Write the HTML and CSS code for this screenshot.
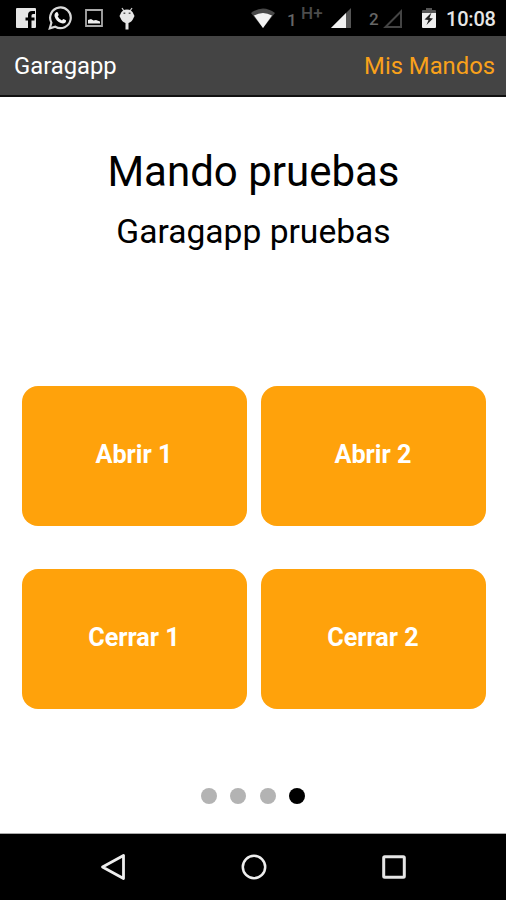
FILE: index.html
```html
<!DOCTYPE html>
<html lang="es">
<head>
<meta charset="utf-8">
<title>Garagapp</title>
<link rel="stylesheet" href="styles.css">
</head>
<body>
<div class="statusbar">
  <svg class="facebook" width="20" height="20" viewBox="0 0 20 20"><path fill="#e6e6e6" d="M1 0h18q1 0 1 1v18q0 1-1 1h-3.500v-7.500h3V9.500h-3V7.500q0-1.500 1.500-1.500h2V3h-3q-4 0-4 4v2.500H9.500v3H12V20H1q-1 0-1-1V1q0-1 1-1z"/></svg>
  <svg class="whatsapp" width="24" height="24" viewBox="0 0 24 24"><path fill="none" stroke="#d9d9d9" stroke-width="2.200" d="M1.800 22.300l1.600-5.600A10.300 10.300 0 1 1 7.300 20.700z"/><path fill="#f2f2f2" d="M8.200 6.200c.7-.5 1.400-.2 1.600.3l.9 2.200c.1.500-.8 1.300-1 1.600.9 2 2.200 3.200 4.300 4.100.5-.4 1.100-1.500 1.600-1.300l2.300 1.200c.4.300.1 1.500-.4 2.100-1.200 1.200-3 1.200-4.600.6-3.100-1.200-5.500-3.700-6.300-6.600-.4-1.500.2-3.300 1.600-4.200z"/></svg>
  <svg class="picture" width="18" height="18" viewBox="0 0 18 18"><path fill="none" stroke="#aaa" stroke-width="1.800" d="M1 1h16v16H1z"/><path fill="#eee" d="M3 14.500V11l3-1 2.500 1.500L11 11l4 1.500v2z"/></svg>
  <svg class="debug" width="16" height="24" viewBox="0 0 16 24"><path stroke="#ccc" stroke-width="1.300" d="M3 1l2 3M13 1l-2 3"/><path fill="#e6e6e6" d="M1.500 7Q3 2.500 8 2.500T14.500 7l1 2-1 2Q13 15 9.500 16v6.500h-3V16Q3 15 1.500 11l-1-2z"/><path fill="#555" d="M4.500 5.500h1.800v1.600H4.500zM9.700 5.500h1.800v1.600H9.700z"/></svg>
  <span class="grow"></span>
  <svg class="wifi" width="24" height="21" viewBox="0 0 24 21"><path fill="#484848" d="M0 5Q12-4 24 5L12 20z"/><path fill="#f2f2f2" d="M3 7.500q9-5 18 0L12 20z"/></svg>
  <span class="sim sim-one">1</span>
  <span class="network">H+</span>
  <svg class="signal" width="22" height="21" viewBox="0 0 22 21"><path fill="#555" d="M21 0v20H1z"/><path fill="#f2f2f2" d="M16 5v15H1z"/></svg>
  <span class="sim sim-two">2</span>
  <svg class="nosignal" width="20" height="20" viewBox="0 0 20 20"><path fill="none" stroke="#444" stroke-width="2" d="M18 2.500V18H2.500z"/></svg>
  <svg class="battery" width="14" height="20" viewBox="0 0 14 20"><path fill="#555" d="M4 0h6v2h3q1 0 1 1v3H0V3q0-1 1-1h3z"/><path fill="#eee" d="M0 5h14v14q0 1-1 1H1q-1 0-1-1z"/><path fill="#222" d="M9.500 4.500L2.500 11.500l4 .5-2 5L11 10.500 7.500 10z"/></svg>
  <span class="clock">10:08</span>
</div>
<header class="appbar"><span class="brand">Garagapp</span><a class="link">Mis Mandos</a></header>
<main>
  <h1>Mando pruebas</h1>
  <h2>Garagapp pruebas</h2>
  <div class="buttons">
    <button>Abrir 1</button><button>Abrir 2</button>
    <button>Cerrar 1</button><button>Cerrar 2</button>
  </div>
  <div class="dots"><i></i><i></i><i></i><i class="on"></i></div>
</main>
<nav>
  <svg width="26" height="28" viewBox="0 0 26 28"><path fill="none" stroke="#eee" stroke-width="2.800" stroke-linejoin="round" d="M23.500 2.500v23L2.500 14z"/></svg>
  <svg width="26" height="26" viewBox="0 0 26 26"><circle cx="13" cy="13" r="11.200" fill="none" stroke="#eee" stroke-width="2.500"/></svg>
  <svg width="26" height="26" viewBox="0 0 26 26"><rect x="2.700" y="2.700" width="20.600" height="20.600" rx="1" fill="none" stroke="#e6e6e6" stroke-width="3"/></svg>
</nav>
</body>
</html>
```
FILE: styles.css
```css
* { box-sizing: border-box; }
body { margin: 0; height: 900px; display: flex; flex-direction: column; overflow: hidden; background: #fff; color: #000; font-family: Roboto, sans-serif; }
.statusbar { height: 36px; flex: none; display: flex; align-items: flex-start; padding: 0 11px 0 16px; background: #000; line-height: 20px; }
.statusbar svg { display: block; flex: none; margin-top: 8px; }
.statusbar .whatsapp { margin: 6px 0 0 12px; }
.statusbar .picture { margin: 9px 0 0 12.500px; }
.statusbar .debug { margin: 7px 0 0 16.500px; }
.grow { flex: 1; }
.sim { width: 11px; margin-top: 10px; color: #666; font-size: 17px; font-weight: 500; }
.sim-one { margin-left: 12px; }
.network { width: 23px; margin: 3px 0 0 3px; color: #4c4c4c; font-size: 17px; font-weight: 500; letter-spacing: 0.3px; }
.statusbar .signal { margin-left: 6px; }
.sim-two { margin: 9px 0 0 17px; }
.statusbar .nosignal { margin-left: 3px; margin-top: 9px; }
.statusbar .battery { margin-left: 19px; }
.clock { width: 49px; margin: 9px 0 0 10px; color: #e6e6e6; font-size: 20px; font-weight: 500; letter-spacing: -0.2px; white-space: nowrap; }
.appbar { height: 61px; flex: none; display: flex; justify-content: space-between; padding: 0 11px 0 14px; background: #444; border-bottom: 2px solid #111; font-size: 23.800px; line-height: 61px; color: #fff; }
.link { color: #f9a11b; }
main { flex: 1; display: flex; flex-direction: column; }
h1, h2 { margin: 0; text-align: center; font-weight: 400; }
h1 { margin-top: 50px; padding-left: 1px; font-size: 42px; line-height: 50px; }
h2 { margin-top: 15px; padding-left: 1px; font-size: 33.600px; line-height: 40px; }
.buttons { display: grid; grid-template-columns: 225px 225px; grid-auto-rows: 140px; gap: 43px 14px; margin: 134px 0 0 21.500px; }
button { border: 0; border-radius: 16px; padding: 0 0 4px; background: #ffa20b; color: #fff; font: 700 25.200px Roboto, sans-serif; }
.dots { display: flex; justify-content: center; gap: 13.500px; margin: 79px 0 0; }
.dots i { width: 16px; height: 16px; border-radius: 50%; background: #b3b3b3; }
.dots .on { background: #000; }
nav { height: 67px; flex: none; display: flex; justify-content: space-between; align-items: center; padding: 0 99px 0 100px; background: #000; border-top: 1px solid #aaa; }
```
